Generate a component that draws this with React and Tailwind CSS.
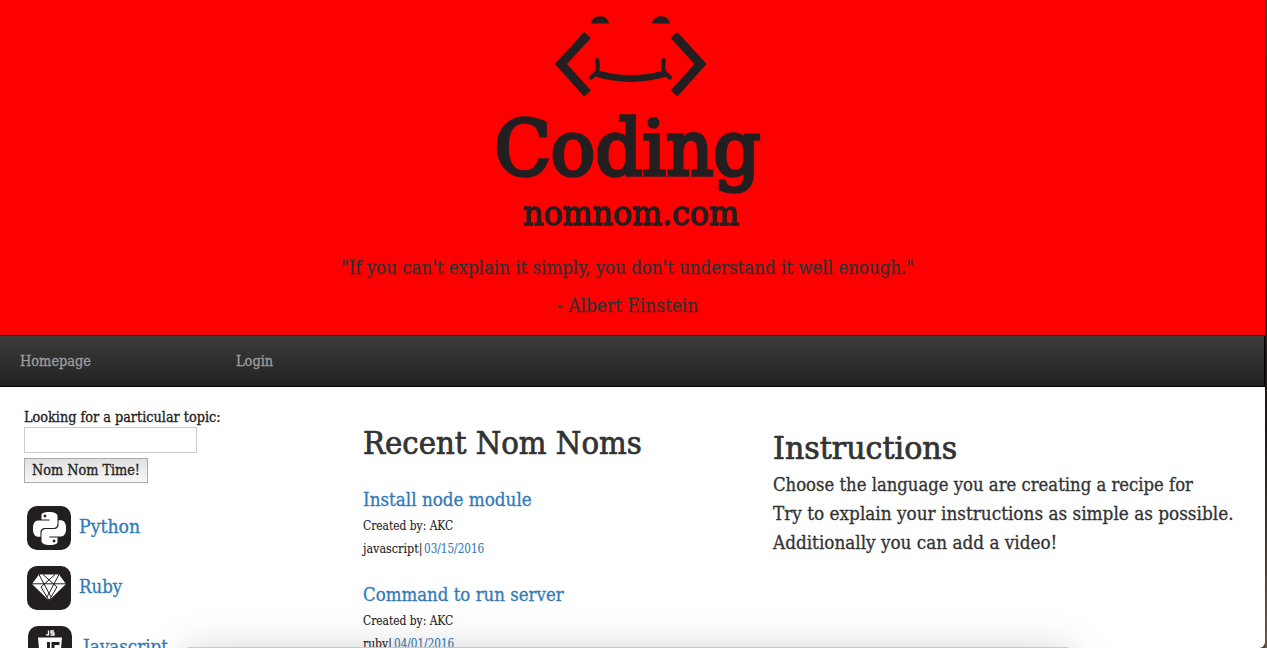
import { useLayoutEffect, useRef, useState } from "react";
import { SiPython } from "react-icons/si";

function Fit({ w, children, className = "" }) {
  const ref = useRef(null);
  const [scale, setScale] = useState(1);
  useLayoutEffect(() => {
    setScale(w / ref.current.offsetWidth);
  }, [w]);
  return (
    <span className={`block whitespace-nowrap ${className}`} style={{ width: w }}>
      <span ref={ref} className="inline-block origin-left" style={{ transform: `scaleX(${scale})` }}>
        {children}
      </span>
    </span>
  );
}

function Logo() {
  return (
    <svg width="300" height="253" viewBox="480 0 300 253" className="block" fill="#231f20">
      <path d="M591 23.500c.5-4 4-7.200 9-7.200s8.600 3.200 9 7.200zM652 23.500c.5-4 4-7.200 9-7.200s8.600 3.200 9 7.200z" />
      <path d="M587.500 35 561 64l26.500 29.500M674 35 700.500 64 674 93.500" fill="none" stroke="#231f20" strokeWidth="9" />
      <path d="M597 73.500q33 10 68.500 0" fill="none" stroke="#231f20" strokeWidth="7" />
      <path d="M597.200 60q1.500 10-1.200 13t-5 4.500M663.800 60q-1.500 10 1.200 13t5 4.500" fill="none" stroke="#231f20" strokeWidth="4.200" strokeLinecap="round" />
      <g fontFamily="'DejaVu Serif Condensed', 'DejaVu Serif', serif" stroke="#231f20">
        <text x="494.500" y="174.500" fontSize="77" strokeWidth="3.600" textLength="266" lengthAdjust="spacingAndGlyphs">Coding</text>
        <text x="523" y="224.500" fontSize="33" strokeWidth="1.300" textLength="216" lengthAdjust="spacingAndGlyphs">nomnom.com</text>
      </g>
    </svg>
  );
}

function Gem() {
  return (
    <svg viewBox="0 0 44 44" className="block size-11">
      <path d="M12 8.500h20l7 9.500L22 34.500 5 18z" fill="#fff" />
      <path d="M5 17.800h34M28 8.500 14 21l8 13.500M16 8.500 30 21l-8 13.500M12 8.500 24 31M32 8.500 20 31" fill="none" stroke="#231f20" strokeWidth="1" />
    </svg>
  );
}

function JsShield() {
  return (
    <svg viewBox="0 0 44 44" className="block size-11">
      <path d="M10 11.500h24l-2.200 25L22 40l-9.800-3.500z" fill="#fff" />
      <path d="M20.500 16v17h-5v-4M31.500 17.500H25v7h5v8h-6" fill="none" stroke="#231f20" strokeWidth="3" />
      <path d="M20.500 4.500v4.300H18M26 5h-3v2h3v2h-3.500" fill="none" stroke="#fff" strokeWidth="1.300" />
    </svg>
  );
}

const languages = [
  { name: "Python", w: 61, icon: <SiPython className="size-[33px] text-white" />, cls: "ml-[3px] gap-2" },
  { name: "Ruby", w: 43, icon: <Gem />, cls: "ml-[3px] gap-2" },
  { name: "Javascript", w: 85, icon: <JsShield />, cls: "ml-1 gap-[11px]" },
];

const recipes = [
  { title: "Install node module", w: 169, lang: "javascript|", lw: 59, date: "03/15/2016" },
  { title: "Command to run server", w: 201, lang: "ruby|", lw: 29, date: "04/01/2016" },
];

export default function App() {
  return (
    <div className="relative flex h-[648px] w-full overflow-hidden bg-[#4a3f38] font-['DejaVu_Serif_Condensed','DejaVu_Serif',serif] text-[#333] [-webkit-text-stroke:0.3px]">
      <div className="w-[1265px] shrink-0 overflow-hidden rounded-br-md bg-white">
        <header className="flex h-[335px] flex-col items-center bg-[#ff0000] pr-[11px] text-lg leading-[29px]">
          <div className="pl-[6px]"><Logo /></div>
          <Fit w={573}>"If you can't explain it simply, you don't understand it well enough."</Fit>
          <Fit w={141} className="mt-[9px]">- Albert Einstein</Fit>
        </header>
        <nav className="flex h-[52px] items-center border-y border-r border-black bg-linear-to-b from-[#3c3c3c] to-[#222] pl-5 text-sm text-[#9d9d9d]">
          <a className="w-[216px]"><Fit w={71}>Homepage</Fit></a>
          <a><Fit w={37}>Login</Fit></a>
        </nav>
        <main className="flex">
          <aside className="w-[363px] shrink-0 pt-5 pl-6 text-sm leading-5">
            <Fit w={197} className="text-[#222]">Looking for a particular topic:</Fit>
            <input className="block h-[26px] w-[173px] border border-[#ccc]" />
            <button className="mt-[5px] flex h-[25px] w-[124px] items-center justify-center border border-[#aaa] bg-linear-to-b from-[#e0e0e0] to-[#f8f8f8] pr-0.5 pb-0.5 text-[#222]">
              <Fit w={108}>Nom Nom Time!</Fit>
            </button>
            <div className="mt-[23px] flex flex-col gap-4 text-lg leading-[29px] text-[#337ab7]">
              {languages.map((l) => (
                <a key={l.name} className={`flex items-center ${l.cls}`}>
                  <span className="flex size-11 items-center justify-center rounded-[10px] bg-[#231f20]">{l.icon}</span>
                  <Fit w={l.w} className="pb-[3px]">{l.name}</Fit>
                </a>
              ))}
            </div>
          </aside>
          <section className="w-[410px] shrink-0 pt-9">
            <h1 className="mb-[22px] text-[32px] leading-10 [-webkit-text-stroke:0.7px]"><Fit w={279}>Recent Nom Noms</Fit></h1>
            {recipes.map((r) => (
              <article key={r.title} className="mb-[19px] text-xs leading-[23px] text-[#222] [-webkit-text-stroke:0.1px]">
                <h2 className="mb-px text-lg leading-[29px] text-[#337ab7] [-webkit-text-stroke:0.3px]"><Fit w={r.w}>{r.title}</Fit></h2>
                <Fit w={90}>Created by: AKC</Fit>
                <div className="flex gap-[2px]">
                  <Fit w={r.lw}>{r.lang}</Fit>
                  <Fit w={60} className="text-[#337ab7]">{r.date}</Fit>
                </div>
              </article>
            ))}
          </section>
          <section className="pt-[41px] text-lg leading-[29px]">
            <h1 className="mb-0.5 text-[32px] leading-10 [-webkit-text-stroke:0.7px]"><Fit w={184}>Instructions</Fit></h1>
            <Fit w={420}>Choose the language you are creating a recipe for</Fit>
            <Fit w={461}>Try to explain your instructions as simple as possible.</Fit>
            <Fit w={284}>Additionally you can add a video!</Fit>
          </section>
        </main>
      </div>
      <div className="w-0.5 bg-linear-to-b from-[#5a3d35] via-[#1c1614] via-65% to-[#6b5a4b]" />
      <div className="absolute top-[647px] left-[186px] h-10 w-[884px] rounded bg-[#c8c8c8] shadow-[0_10px_45px_rgba(0,0,0,0.25)]" />
    </div>
  );
}
